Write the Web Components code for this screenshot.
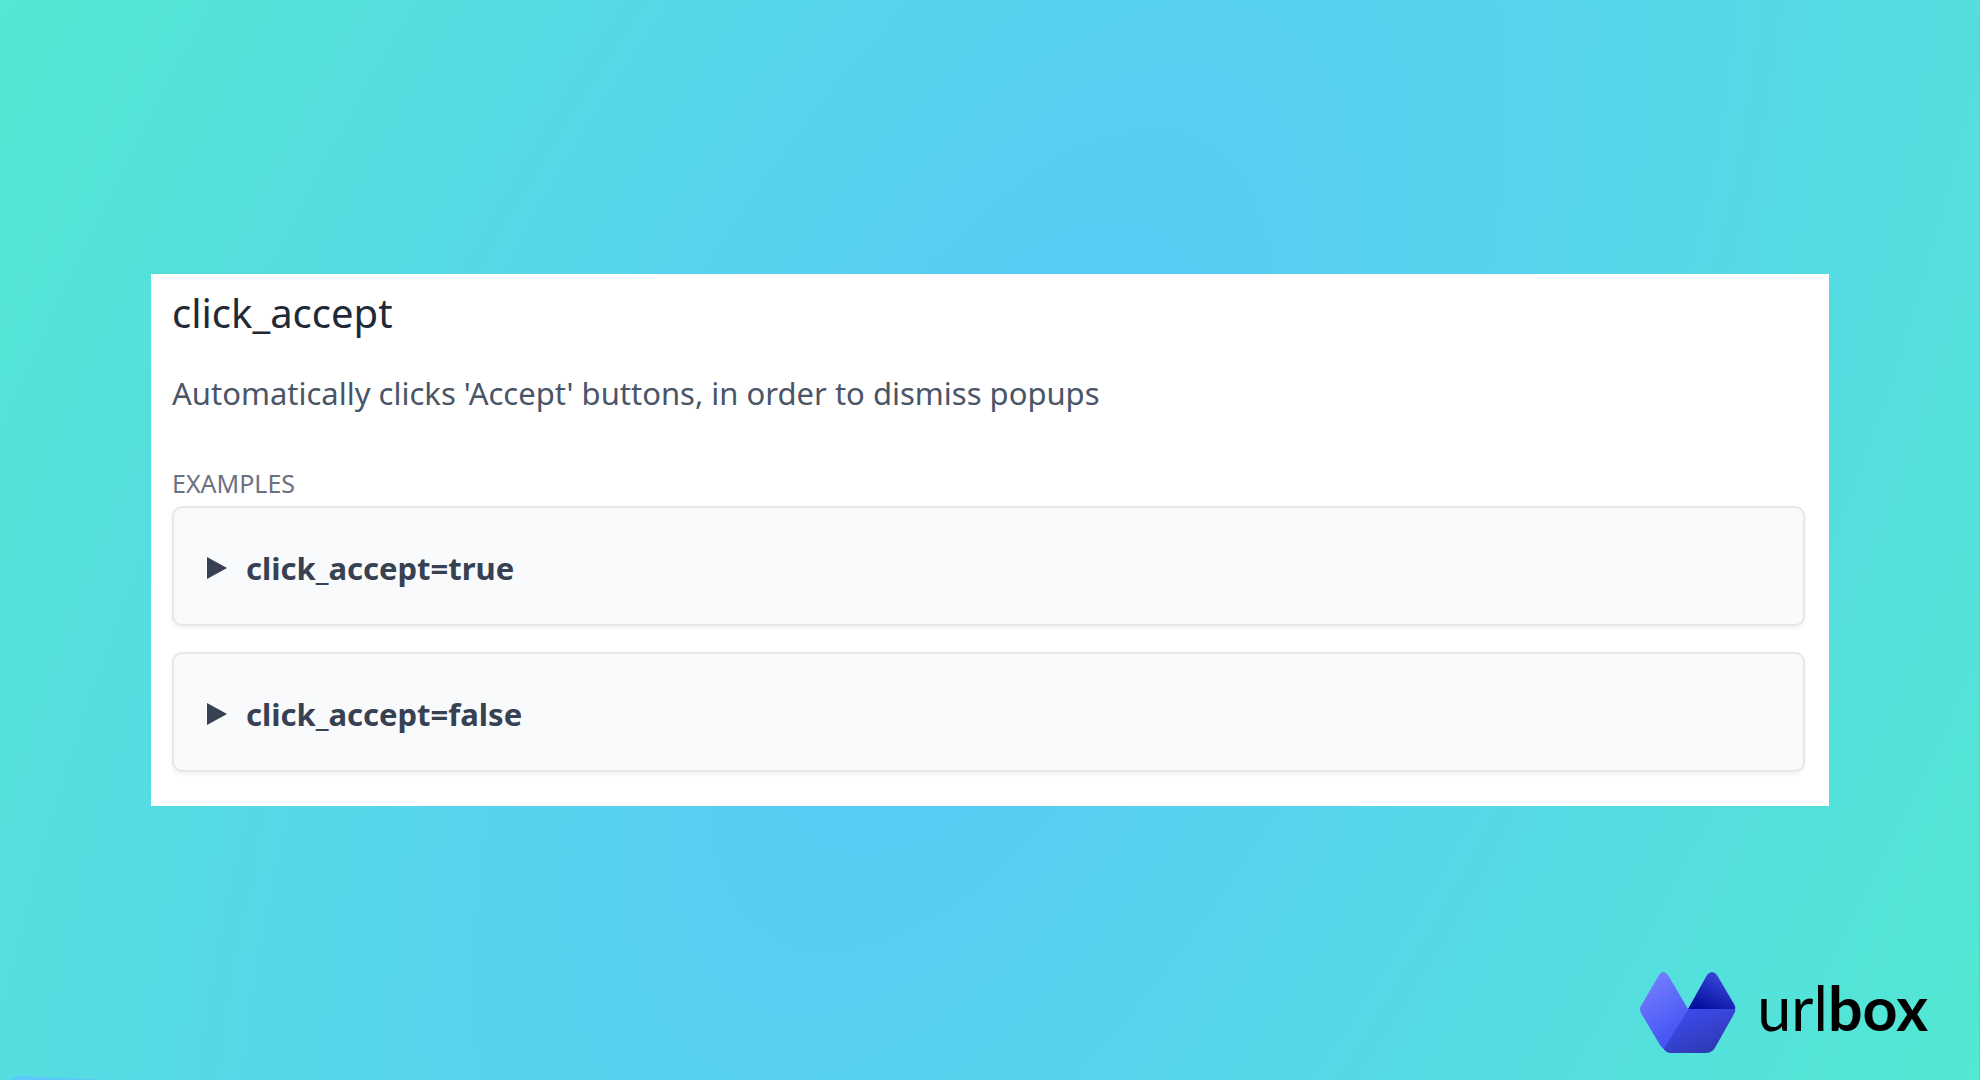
<!DOCTYPE html>
<html lang="en">
<head>
<meta charset="utf-8">
<title>click_accept</title>
<style>
body { margin: 0; font-family: "Noto Sans", sans-serif; }
</style>
</head>
<body>
<option-page>
  <option-card name="click_accept">
    <span slot="description">Automatically clicks 'Accept' buttons, in order to dismiss popups</span>
    <option-example>click_accept=true</option-example>
    <option-example>click_accept=false</option-example>
  </option-card>
  <brand-logo slot="brand"></brand-logo>
</option-page>
<script>
class OptionPage extends HTMLElement {
  constructor() {
    super();
    this.attachShadow({ mode: 'open' }).innerHTML = `
      <style>
        :host { display: grid; grid-template-rows: 1fr auto 1fr; min-height: 100vh; box-sizing: border-box; isolation: isolate; position: relative; overflow: hidden; }
        .backdrop { position: absolute; inset: 0; width: 100%; height: 100%; z-index: -1; }
        main { grid-row: 2; padding: 0 151px; }
        footer { grid-row: 3; display: flex; justify-content: flex-end; align-items: flex-end; padding: 0 52px 27px; }
      </style>
      <svg class="backdrop" viewBox="0 0 1980 1080" preserveAspectRatio="none" aria-hidden="true">
        <defs>
          <radialGradient id="sky" gradientUnits="userSpaceOnUse" cx="0" cy="0" r="1" gradientTransform="translate(990 540) rotate(28) scale(1150 2500)">
            <stop offset="0" stop-color="#5ac8fa"/><stop offset="1" stop-color="#52e9d1"/>
          </radialGradient>
        </defs>
        <rect width="1980" height="1080" fill="url(#sky)"/>
        <path d="M10 1080L17 1076L110 1080ZM1979 15H1980V1080H1979Z" fill="#5ac8fa"/>
      </svg>
      <main><slot></slot></main>
      <footer><slot name="brand"></slot></footer>`;
  }
}
class OptionCard extends HTMLElement {
  constructor() {
    super();
    this.attachShadow({ mode: 'open' }).innerHTML = `
      <style>
        :host { display: block; background: #fff; padding: 14px 24px 34px 21px; }
        h1 { margin: 0; font-size: 40px; line-height: 50px; font-weight: 400; color: #1f2937; }
        p { margin: 20px 0 0; font-size: 31px; line-height: 70px; color: #4a5568; }
        h2 { margin: 37px 0 0; padding-bottom: 5px; font-size: 25px; line-height: 36px; font-weight: 400; color: #6b7280; }
        .list { display: flex; flex-direction: column; gap: 26px; }
      </style>
      <article>
        <h1></h1>
        <p><slot name="description"></slot></p>
        <h2>EXAMPLES</h2>
        <div class="list"><slot></slot></div>
      </article>`;
  }
  connectedCallback() {
    this.shadowRoot.querySelector('h1').textContent = this.getAttribute('name');
  }
}
class OptionExample extends HTMLElement {
  constructor() {
    super();
    this.attachShadow({ mode: 'open' }).innerHTML = `
      <style>
        :host { display: block; background: #f9fafb; border: 2px solid #e5e7eb; border-radius: 10px; box-shadow: 0 2px 4px rgba(0,0,0,.06); color: #374151; }
        summary { display: flex; align-items: center; gap: 19px; padding: 39px 33px 35px; font-size: 31px; line-height: 42px; font-weight: 700; list-style: none; cursor: pointer; }
        svg { width: 20px; height: 24px; flex: none; fill: currentColor; }
        details[open] svg { transform: rotate(90deg); }
      </style>
      <details><summary><svg viewBox="0 0 20 24" aria-hidden="true"><path d="M0 1L20 12L0 23Z"/></svg><slot></slot></summary></details>`;
  }
}
class BrandLogo extends HTMLElement {
  constructor() {
    super();
    this.attachShadow({ mode: 'open' }).innerHTML = `
      <style>
        :host { display: flex; align-items: flex-start; gap: 21px; color: #000; }
        svg { width: 96px; height: 82px; flex: none; }
        span { font-family: Lato, sans-serif; font-size: 61px; line-height: 74px; }
        b { font-weight: 700; }
      </style>
      <svg viewBox="0 0 96 82" aria-hidden="true">
        <defs>
          <linearGradient id="l" x1="0" y1="0" x2=".4" y2="1"><stop stop-color="#7b84ff"/><stop offset="1" stop-color="#4353f4"/></linearGradient>
          <linearGradient id="r" x1=".9" y1=".1" x2=".35" y2="1"><stop stop-color="#3e4cdd"/><stop offset="1" stop-color="#0510a0"/></linearGradient>
          <linearGradient id="b" x1=".3" y1=".1" x2=".8" y2=".9"><stop stop-color="#3d49ea"/><stop offset="1" stop-color="#2d3ab2"/></linearGradient>
        </defs>
        <path d="M1 35L19 4Q23-2 28 4L48 38L25 79Q23 78 20 74L1 42Q-1 38 1 35Z" fill="url(#l)"/>
        <path d="M48 38L67 4Q72-2 77 4L94 33Q96 36 95 38Z" fill="url(#r)"/>
        <path d="M48 38H95Q96 39 94 43L76 75Q73 82 66 82H31Q26 82 24 78Z" fill="url(#b)"/>
      </svg>
      <span>url<b>box</b></span>`;
  }
}
customElements.define('option-page', OptionPage);
customElements.define('option-card', OptionCard);
customElements.define('option-example', OptionExample);
customElements.define('brand-logo', BrandLogo);
</script>
</body>
</html>
